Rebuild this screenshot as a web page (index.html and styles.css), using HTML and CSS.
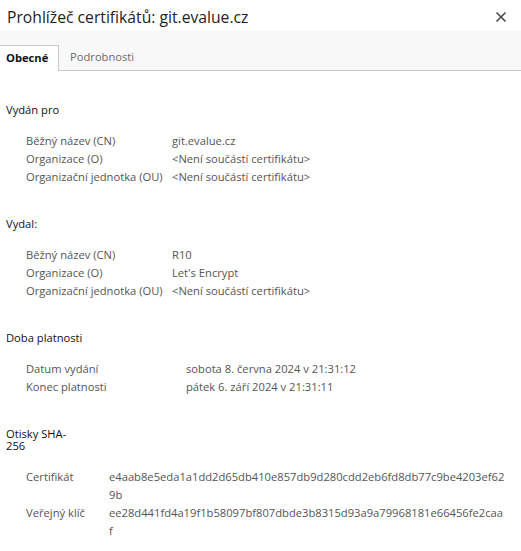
FILE: index.html
```html
<!DOCTYPE html>
<html lang="cs">
<head>
<meta charset="utf-8">
<title>Prohlížeč certifikátů</title>
<link rel="stylesheet" href="styles.css">
</head>
<body>
<div class="dialog">
  <header class="titlebar">
    <h1 class="title">Prohlížeč certifikátů: git.evalue.cz</h1>
    <button class="close" aria-label="Zavřít">
      <svg width="12" height="12" viewBox="0 0 12 12"><path d="M1.5 1.5 L10.5 10.5 M10.5 1.5 L1.5 10.5" stroke="#4a4a4a" stroke-width="1.6" fill="none"/></svg>
    </button>
  </header>
  <nav class="tabs">
    <div class="tab tab-active">Obecné</div>
    <div class="tab">Podrobnosti</div>
  </nav>
  <main class="content">
    <section class="section">
      <h2 class="section-title">Vydán pro</h2>
      <div class="rows rows-issued">
        <div class="label">Běžný název (CN)</div><div class="value">git.evalue.cz</div>
        <div class="label">Organizace (O)</div><div class="value">&lt;Není součástí certifikátu&gt;</div>
        <div class="label">Organizační jednotka (OU)</div><div class="value">&lt;Není součástí certifikátu&gt;</div>
      </div>
    </section>
    <section class="section">
      <h2 class="section-title">Vydal:</h2>
      <div class="rows rows-issued">
        <div class="label">Běžný název (CN)</div><div class="value">R10</div>
        <div class="label">Organizace (O)</div><div class="value">Let's Encrypt</div>
        <div class="label">Organizační jednotka (OU)</div><div class="value">&lt;Není součástí certifikátu&gt;</div>
      </div>
    </section>
    <section class="section">
      <h2 class="section-title">Doba platnosti</h2>
      <div class="rows rows-validity">
        <div class="label">Datum vydání</div><div class="value">sobota 8. června 2024 v 21:31:12</div>
        <div class="label">Konec platnosti</div><div class="value">pátek 6. září 2024 v 21:31:11</div>
      </div>
    </section>
    <section class="section">
      <h2 class="section-title section-title-narrow">Otisky SHA-256</h2>
      <div class="rows rows-hash">
        <div class="label">Certifikát</div><div class="value hash">e4aab8e5eda1a1dd2d65db410e857db9d280cdd2eb6fd8db77c9be4203ef629b</div>
        <div class="label">Veřejný klíč</div><div class="value hash">ee28d441fd4a19f1b58097bf807dbde3b8315d93a9a79968181e66456fe2caaf</div>
      </div>
    </section>
  </main>
</div>
</body>
</html>
```

FILE: styles.css
```css
* { box-sizing: border-box; }
html, body {
  margin: 0;
  padding: 0;
  background: #ffffff;
}
body {
  font-family: "Open Sans", "Noto Sans", sans-serif;
  font-size: 11.2px;
  color: #222;
  width: 521px;
  height: 551px;
  overflow: hidden;
}
.dialog {
  display: flex;
  flex-direction: column;
}
.titlebar {
  height: 31px;
  display: flex;
  align-items: center;
  justify-content: space-between;
  padding: 0 14px 0 7px;
  background: #fff;
}
.title {
  margin: 0;
  font-size: 15.7px;
  font-weight: normal;
  color: #222;
  line-height: 20px;
  padding-top: 3px;
}
.close {
  border: 0;
  background: transparent;
  padding: 0;
  width: 12px;
  height: 12px;
  display: flex;
  margin-top: 2px;
}
.tabs {
  height: 40px;
  background: #f8f8f8;
  border-bottom: 1px solid #c8c8c8;
  display: flex;
  align-items: flex-end;
}
.tab {
  height: 25px;
  line-height: 24px;
  padding: 0 12px 0 11px;
  color: #6a6a6a;
}
.tab-active {
  height: 26px;
  width: 59px;
  padding: 0 0 0 6px;
  margin-bottom: -1px;
  background: #fff;
  border-top: 1px solid #c8c8c8;
  border-right: 1px solid #c8c8c8;
  color: #111;
  font-weight: bold;
}
.content {
  padding: 33px 6px 0 6px;
}
.section {
  margin-bottom: 32px;
}
.section-title {
  margin: 0 0 16px 0;
  font-size: 11.2px;
  font-weight: normal;
  line-height: 12px;
  color: #111;
}
.section-title-narrow {
  width: 72px;
}
.rows {
  display: grid;
  padding-left: 20px;
  line-height: 18px;
  color: #555;
}
.rows-issued { grid-template-columns: 146px 1fr; }
.rows-validity { grid-template-columns: 160px 1fr; }
.rows-hash { grid-template-columns: 83px 1fr; }
.hash {
  word-break: break-all;
  padding-right: 9px;
}
```
